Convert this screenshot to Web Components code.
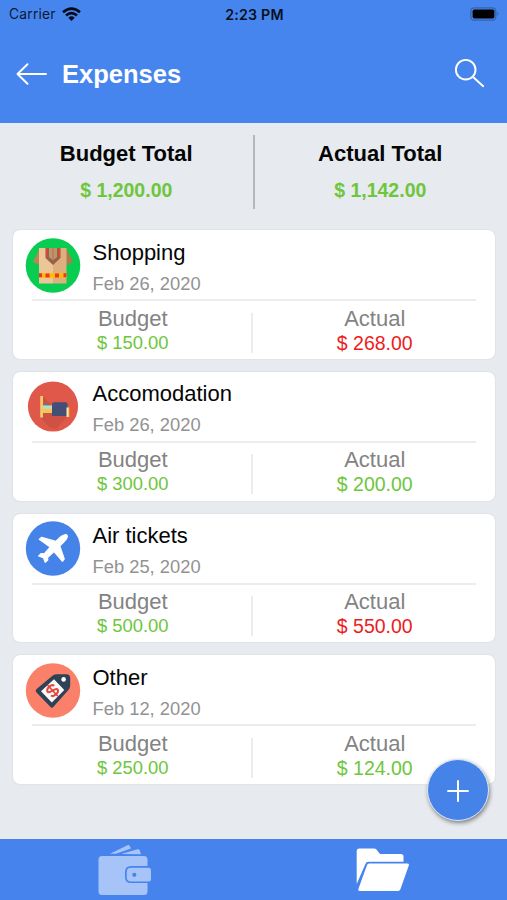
<!DOCTYPE html>
<html lang="en">
<head>
<meta charset="utf-8">
<title>Expenses</title>
<style>
html,body{margin:0;height:100%}
body{background:#e7eaef;font-family:"Liberation Sans",Arial,sans-serif;overflow:hidden}
</style>
</head>
<body>
<expense-app></expense-app>
<script>
const define = (name, html, setup) => {
  const t = document.createElement('template');
  t.innerHTML = html;
  customElements.define(name, class extends HTMLElement {
    constructor() {
      super();
      this.attachShadow({ mode: 'open' }).append(t.content.cloneNode(true));
    }
    connectedCallback() { if (setup) setup(this, this.shadowRoot); }
  });
};

define('status-bar', `
<style>
:host{display:grid;grid-template-columns:1fr auto 1fr;align-items:center;height:27px;padding:0 7px 0 9px;color:#0b1a33;font:13.8px/27px Inter,sans-serif}
.l{display:flex;align-items:center;gap:6px}
.l span{letter-spacing:.22px;padding-top:1px}
b{font-weight:600;color:#081020;font-size:14.2px;letter-spacing:.2px}
.r{justify-self:end;display:flex}
svg{display:block}
</style>
<div class="l"><span>Carrier</span><svg width="19" height="14" viewBox="0 0 19 14"><g fill="none" stroke="#050b18" stroke-width="2.7"><path d="M1 5.2Q9.5-2 18 5.2"/><path d="M4 8.5Q9.5 3.8 15 8.5"/></g><path d="M6.3 10.7Q9.5 8 12.7 10.7L9.5 14Z" fill="#050b18"/></svg></div>
<b>2:23 PM</b>
<div class="r"><svg width="30" height="14" viewBox="0 0 30 14"><rect x=".8" y=".8" width="25" height="12.4" rx="3.5" fill="none" stroke="#3563ae" stroke-width="1.3"/><rect x="2.6" y="2.4" width="21.8" height="9.2" rx="1.8"/><path d="M27.3 4.7Q29.7 6.8 27.3 9Z" fill="#3563ae"/></svg></div>`);

define('nav-bar', `
<style>
:host{display:flex;align-items:center;height:94px;box-sizing:border-box;padding:0 22px 0 16px;color:#fff}
h1{flex:1;margin:0 0 0 15px;font-size:25.5px;line-height:30px;font-weight:700}
svg{display:block}
.s{margin-top:-3px}
</style>
<svg width="31" height="22" viewBox="0 0 31 22" fill="none" stroke="#fff" stroke-width="1.9" stroke-linecap="round" stroke-linejoin="round"><path d="M30 11H1.5M11.5 1.2L1.5 11L11.5 20.8"/></svg>
<h1><slot></slot></h1>
<svg class="s" width="31" height="30" viewBox="0 0 31 30" fill="none" stroke="#fff" stroke-width="1.9" stroke-linecap="round"><circle cx="11.7" cy="11.7" r="9.8"/><path d="M18.8 18.8L29.2 28.2"/></svg>`);

define('total-block', `
<style>
:host{display:flex;flex-direction:column;align-items:center}
.t{font-weight:700;font-size:22px;line-height:26px;color:#050505}
.v{font-weight:700;font-size:19.5px;line-height:22px;margin-top:12px;color:#6ec63c}
</style>
<div class="t"><slot name="title"></slot></div><div class="v"><slot></slot></div>`);

define('totals-panel', `
<style>
:host{display:grid;grid-template-columns:1fr 2px 1fr;height:107px;box-sizing:border-box;padding:12px 0 0 0}
i{background:#b4b8bb;height:74px}
total-block{padding-top:6px}
total-block:first-child{padding-left:4px}
total-block:last-child{padding-right:1px}
</style>
<total-block><span slot="title">Budget Total</span>$ 1,200.00</total-block><i></i><total-block><span slot="title">Actual Total</span>$ 1,142.00</total-block>`);

const icons = {
  shopping: `<circle cx="28" cy="27.5" r="27.3" fill="#08cd51"/>
    <path d="M15 10L8 24L15 27Z" fill="#bb8554"/><path d="M41 10L48 24L41 27Z" fill="#b07a4d"/>
    <path d="M14 10H28V45.5H14Z" fill="#edc697"/><path d="M28 10H41.5V45.5H28Z" fill="#ddb07d"/>
    <path d="M20.5 10H35.5V20L28 27L20.5 20Z" fill="#96604a"/><path d="M24 10H32V19L28 22.5L24 19Z" fill="#c09468"/>
    <path d="M21.8 10V19M34.2 10V19" stroke="#d9463b" stroke-width="1.8"/><path d="M28 10V22" stroke="#ad744b"/>
    <path d="M14 35.3H41.5V39.7H14Z" fill="#ffbd00"/>
    <path d="M14 35.3h3v4h-3zM20.5 35.5h4v4h-4zM30 35.5h4v4h-4zM38.5 35.3h3v4h-3z" fill="#ee3525"/>`,
  bed: `<circle cx="28" cy="27.5" r="25.1" fill="#df584a"/>
    <path d="M17.5 17L28 27V37H43L31 50Q25 50 21 45L15 38Z" fill="#c34c40" opacity=".6"/>
    <path d="M15.2 17h2.8v21.5h-2.8z" fill="#f3cc67"/><path d="M18 28h11v6h-11z" fill="#f4c65a"/>
    <path d="M18 26.6l3-1 4 .8 4-.7v4h-11z" fill="#b5ddcb"/><path d="M18 26.2l4-1.6 2 2z" fill="#398b88"/>
    <path d="M27 25q0-1.8 2-1.8h11.5q2 0 2 2v11.8H27z" fill="#444f75"/><path d="M41.5 28.5h1.8V38h-1.8z" fill="#f7e8b3"/><path d="M43 28.5h1.3V38h-1.3z" fill="#f4c65a"/>`,
  plane: `<circle cx="28" cy="27.5" r="27.2" fill="#4683e9"/>
    <path d="M39.7 13.8C41.6 13.1 43 14.5 42.1 16.7C41.6 18.4 40.3 19.8 38.5 21.3L34.8 25L39.3 38L37.5 40.3L29 30.7L22.6 36.5L22.8 39L20.2 41.4L18.4 36.8L13.6 35L16 32.6L19.2 32.8L25.1 26L14.2 18.3L16.6 16.2L30.8 20.4L35.2 16.2C36.8 14.8 38 14.2 39.7 13.8Z" fill="#fff" stroke="#fff" stroke-width="1.1" stroke-linejoin="round"/>`,
  tag: `<circle cx="28" cy="27.5" r="27.2" fill="#fb806a"/>
    <path d="M27.5 12.8Q28.8 11.3 31 11.2L41.3 11.2Q45 11.4 45.2 14.8L45.2 22Q45.2 25 43.6 26.8L28.5 43.8Q27 45.6 25.3 43.8L11.3 29.3Q10 27.8 11.3 26.3Z" fill="#2d4255"/>
    <path d="M29 16.2L39.3 27L26.8 39.5L16 28.3Z" fill="#fafafa"/>
    <circle cx="38.6" cy="16.4" r="2.3" fill="#fff"/>
    <g transform="translate(27.6 27.6) rotate(-43)" fill="none" stroke="#e6473d" stroke-width="2.1"><path d="M4.4-2.4C4.4-6-4.4-6-4.4-2.5C-4.4.6 4.4-.6 4.4 2.5C4.4 6-4.4 6-4.4 2.4"/><path d="M0-7.6V7.6" stroke-width="1.6"/></g>`
};

define('expense-icon', `
<style>:host{display:block;width:56px;height:56px}svg{display:block}</style>
<svg width="56" height="56" viewBox="0 0 56 56"></svg>`,
(el, r) => { r.querySelector('svg').innerHTML = icons[el.getAttribute('kind')] || ''; });

define('amount-cell', `
<style>
:host{display:flex;flex-direction:column;align-items:center;color:#838383}
.k{font-size:22px;line-height:26px}
.v{font-size:var(--amount-size,18.4px);line-height:22px;color:#6ec63c}
:host([over]) .v{color:#ec1c20}
</style>
<div class="k"><slot name="label"></slot></div><div class="v"><slot></slot></div>`);

define('expense-card', `
<style>
:host{display:block;box-sizing:border-box;height:128.5px;background:#fff;border-radius:7px;box-shadow:0 0 1.5px #c6cad0;padding:7.2px 19px 0 11.5px}
.top{display:flex;gap:12px;height:61.6px}
.name{font-size:22px;line-height:26px;color:#050505;padding-top:2px}
.date{font-size:18.35px;line-height:22px;color:#929292;margin-top:7px}
.line{height:2px;background:#ececef;margin-left:7.5px}
.amounts{display:grid;grid-template-columns:226.5px 2px 1fr;margin:4.5px -21px 0 0}
.amounts i{background:#ececef;height:40px;margin-top:7px}
.b{margin-left:-12px;padding-left:2px}
.a{--amount-size:19.5px}
</style>
<div class="top"><expense-icon></expense-icon><div><div class="name"></div><div class="date"></div></div></div>
<div class="line"></div>
<div class="amounts"><amount-cell class="b"><span slot="label">Budget</span><span class="bv"></span></amount-cell><i></i><amount-cell class="a"><span slot="label">Actual</span><span class="av"></span></amount-cell></div>`,
(el, r) => {
  const g = k => el.getAttribute(k);
  const icon = document.createElement('expense-icon');
  icon.setAttribute('kind', g('kind'));
  r.querySelector('expense-icon').replaceWith(icon);
  r.querySelector('.name').textContent = g('name');
  r.querySelector('.date').textContent = g('date');
  r.querySelector('.bv').textContent = g('budget');
  r.querySelector('.av').textContent = g('actual');
  r.querySelector('.a').toggleAttribute('over', el.hasAttribute('over'));
});

define('add-button', `
<style>
:host{display:grid;place-items:center;box-sizing:border-box;width:62px;height:62px;border-radius:50%;background:#4683e9;border:1.5px solid #e2e9f6;box-shadow:1px 2px 4px rgba(0,0,0,.45)}
svg{margin:1px 1px 0 0}
</style>
<svg width="24" height="24" viewBox="0 0 24 24" stroke="#fff" stroke-width="2"><path d="M1.3 12H22.7M12 1.3V22.7"/></svg>`);

define('tab-bar', `
<style>
:host{display:grid;grid-template-columns:1fr 1fr;height:61px;background:#4683ed}
div{display:flex;justify-content:center;padding-top:5.5px}
div:first-child{padding-right:4px}
div:last-child{padding-left:6px}
.w{margin-right:4px}
svg{display:block}
</style>
<div><svg class="w" width="54" height="50" viewBox="0 0 54 50" fill="#a6c4f8"><path d="M12 8.8L29.5.2Q31-.2 31.8 1L33 3.4L18 8.8Z"/><path d="M23 9L39.5 4.2Q41 3.9 41.6 5L43 9.2Z"/>
<path d="M4 11H46Q49.5 11 49.5 14.5V21H33Q27 21 27 27V32Q27 38 33 38H49.5V46.5Q49.5 50 46 50H4Q.5 50 .5 46.5V14.5Q.5 11 4 11Z"/><path d="M33 22.8H50.5Q53 22.8 53 25.3V34Q53 36.5 50.5 36.5H33Q28.7 36.5 28.7 32V27.2Q28.7 22.8 33 22.8Z"/><circle cx="36.3" cy="29.8" r="2.1" fill="#4683ed"/></svg></div>
<div><svg width="54" height="50" viewBox="0 0 54 50" fill="#fff"><path d="M.7 39V6Q.7 3.4 3.2 3.4H18.2Q19.5 3.4 20.4 4.5L24 9H45Q47.5 9 47.5 11.5V16.8H12.5Q10.2 16.8 9.4 19Z"/><path d="M13 18.5H51.5Q53.5 18.5 52.8 20.6L44.5 44Q43.8 46 42 46H3.5Q1.6 46 2.4 44L11 20Q11.6 18.5 13 18.5Z"/></svg></div>`);

define('expense-app', `
<style>
:host{display:flex;flex-direction:column;position:relative;width:507px;height:900px;background:#e7eaef}
header{background:#4785ee;height:123px}
main{flex:1;display:flex;flex-direction:column;min-height:0}
.list{display:flex;flex-direction:column;gap:13.2px;padding:.4px 12.5px 0 13px}
add-button{position:absolute;left:427px;top:759px}
</style>
<header><status-bar></status-bar><nav-bar>Expenses</nav-bar></header>
<main><totals-panel></totals-panel>
<div class="list">
<expense-card kind="shopping" name="Shopping" date="Feb 26, 2020" budget="$ 150.00" actual="$ 268.00" over></expense-card>
<expense-card kind="bed" name="Accomodation" date="Feb 26, 2020" budget="$ 300.00" actual="$ 200.00"></expense-card>
<expense-card kind="plane" name="Air tickets" date="Feb 25, 2020" budget="$ 500.00" actual="$ 550.00" over></expense-card>
<expense-card kind="tag" name="Other" date="Feb 12, 2020" budget="$ 250.00" actual="$ 124.00"></expense-card>
</div></main>
<tab-bar></tab-bar>
<add-button></add-button>`);
</script>
</body>
</html>
